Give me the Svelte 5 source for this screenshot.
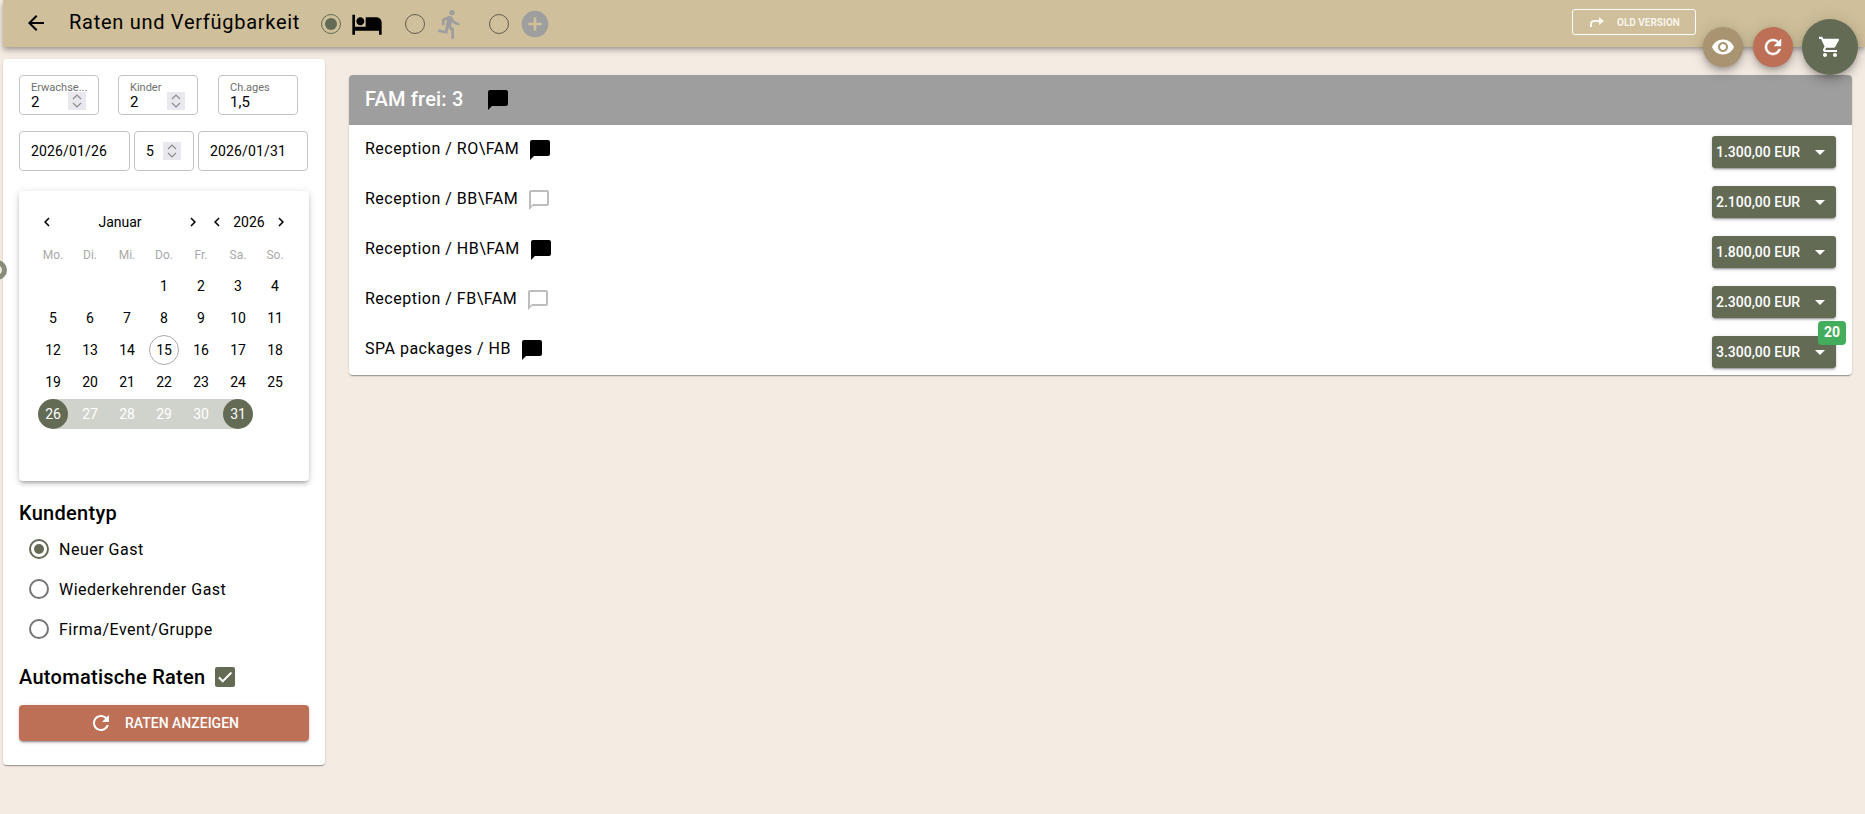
<script>
  // Rate & availability screen: left search panel, right list of room rates.
  const icons = {
    back: 'M20 11H7.83l5.59-5.59L12 4l-8 8 8 8 1.41-1.41L7.83 13H20v-2z',
    hotel: 'M7 13c1.66 0 3-1.34 3-3S8.66 7 7 7s-3 1.34-3 3 1.34 3 3 3zm12-6h-8v7H3V5H1v15h2v-3h18v3h2v-9c0-2.21-1.79-4-4-4z',
    run: 'M13.49 5.48c1.1 0 2-.9 2-2s-.9-2-2-2-2 .9-2 2 .9 2 2 2zm-3.6 13.9l1-4.4 2.1 2v6h2v-7.5l-2.1-2 .6-3c1.3 1.5 3.3 2.5 5.5 2.5v-2c-1.9 0-3.5-1-4.3-2.4l-1-1.6c-.4-.6-1-1-1.7-1-.3 0-.5.1-.8.1l-5.2 2.2v4.7h2v-3.4l1.8-.7-1.6 8.1-4.9-1-.4 2 7 1.4z',
    add: 'M12 2C6.48 2 2 6.48 2 12s4.48 10 10 10 10-4.48 10-10S17.52 2 12 2zm5 11h-4v4h-2v-4H7v-2h4V7h2v4h4v2z',
    chat: 'M20 2H4c-1.1 0-2 .9-2 2v18l4-4h14c1.1 0 2-.9 2-2V4c0-1.1-.9-2-2-2z',
    chatOutline: 'M20 2H4c-1.1 0-2 .9-2 2v18l4-4h14c1.1 0 2-.9 2-2V4c0-1.1-.9-2-2-2zm0 14H6l-2 2V4h16v12z',
    eye: 'M12 4.5C7 4.5 2.73 7.61 1 12c1.73 4.39 6 7.5 11 7.5s9.27-3.11 11-7.5c-1.73-4.39-6-7.5-11-7.5zM12 17c-2.76 0-5-2.24-5-5s2.24-5 5-5 5 2.24 5 5-2.24 5-5 5zm0-8c-1.66 0-3 1.34-3 3s1.34 3 3 3 3-1.34 3-3-1.34-3-3-3z',
    refresh: 'M17.65 6.35C16.2 4.9 14.21 4 12 4c-4.42 0-7.99 3.58-7.99 8s3.57 8 7.99 8c3.73 0 6.84-2.55 7.73-6h-2.08c-.82 2.33-3.04 4-5.65 4-3.31 0-6-2.69-6-6s2.69-6 6-6c1.66 0 3.14.69 4.22 1.78L13 11h7V4l-2.35 2.35z',
    cart: 'M7 18c-1.1 0-1.99.9-1.99 2S5.9 22 7 22s2-.9 2-2-.9-2-2-2zM1 2v2h2l3.6 7.59-1.35 2.45c-.16.28-.25.61-.25.96 0 1.1.9 2 2 2h12v-2H7.42c-.14 0-.25-.11-.25-.25l.03-.12.9-1.83h7.45c.75 0 1.41-.41 1.75-1.03l3.58-6.49c.08-.14.12-.31.12-.48 0-.55-.45-1-1-1H5.21l-.94-2H1zm16 16c-1.1 0-1.99.9-1.99 2s.89 2 1.99 2 2-.9 2-2-.9-2-2-2z',
    left: 'M15.41 7.41L14 6l-6 6 6 6 1.41-1.41L10.83 12z',
    right: 'M10 6L8.59 7.41 13.17 12l-4.58 4.59L10 18l6-6z',
    caret: 'M7 10l5 5 5-5z',
    check: 'M9 16.17L4.83 12l-1.42 1.41L9 19 21 7l-1.41-1.41z',
  };

  const weekdays = ['Mo.', 'Di.', 'Mi.', 'Do.', 'Fr.', 'Sa.', 'So.'];
  const days = [...Array(3).fill(null), ...Array.from({ length: 31 }, (_, i) => i + 1)];

  function dayClass(d) {
    if (d === 26) return 'start';
    if (d === 31) return 'end';
    if (d > 26 && d < 31) return 'between';
    if (d === 15) return 'today';
    return '';
  }

  const customerTypes = [
    { label: 'Neuer Gast', checked: true },
    { label: 'Wiederkehrender Gast' },
    { label: 'Firma/Event/Gruppe' },
  ];

  const rates = [
    { name: 'Reception / RO\\FAM', note: true, price: '1.300,00 EUR' },
    { name: 'Reception / BB\\FAM', note: false, price: '2.100,00 EUR' },
    { name: 'Reception / HB\\FAM', note: true, price: '1.800,00 EUR' },
    { name: 'Reception / FB\\FAM', note: false, price: '2.300,00 EUR' },
    { name: 'SPA packages / HB', note: true, price: '3.300,00 EUR', badge: 20 },
  ];
</script>

{#snippet icon(d, size = 24, cls = '')}
  <svg class="icon {cls}" width={size} height={size} viewBox="0 0 24 24"><path {d} /></svg>
{/snippet}

{#snippet spinner()}
  <span class="spinner">
    <svg width="12" height="8" viewBox="0 0 12 8"><path d="M2 6l4-4 4 4" /></svg>
    <svg width="12" height="8" viewBox="0 0 12 8"><path d="M2 2l4 4 4-4" /></svg>
  </span>
{/snippet}

<div class="page">
  <header class="topbar">
    <span class="back">{@render icon(icons.back)}</span>
    <h1>Raten und Verfügbarkeit</h1>
    <span class="mode mode-hotel">
      <span class="radio small checked"></span>
      {@render icon(icons.hotel, 32, 'black')}
    </span>
    <span class="mode mode-run">
      <span class="radio small"></span>
      {@render icon(icons.run, 32, 'grey')}
    </span>
    <span class="mode mode-add">
      <span class="radio small"></span>
      {@render icon(icons.add, 32, 'grey')}
    </span>
    <button class="old-version">
      <svg width="14" height="12" viewBox="0 0 14 12">
        <path class="stem" d="M1 11V8c0-2 1-3 3-3h6" />
        <path class="head" d="M9 1l5 4-5 4z" />
      </svg>
      <span>OLD VERSION</span>
    </button>
  </header>

  <div class="fabs">
    <button class="fab eye">{@render icon(icons.eye)}</button>
    <button class="fab reload">{@render icon(icons.refresh)}</button>
    <button class="fab cart">{@render icon(icons.cart)}</button>
  </div>

  <span class="drawer-handle"></span>

  <div class="content">
    <aside class="panel">
      <div class="fields top">
        <div class="field w80">
          <label for="adults">Erwachse...</label>
          <span class="value" id="adults">2</span>
          {@render spinner()}
        </div>
        <div class="field w80">
          <label for="kids">Kinder</label>
          <span class="value" id="kids">2</span>
          {@render spinner()}
        </div>
        <div class="field w80 ages">
          <label for="ages">Ch.ages</label>
          <span class="value" id="ages">1,5</span>
        </div>
      </div>

      <div class="fields dates">
        <div class="field date from">2026/01/26</div>
        <div class="field date nights">5 {@render spinner()}</div>
        <div class="field date to">2026/01/31</div>
      </div>

      <div class="calendar">
        <div class="cal-nav">
          <div class="cal-group month">
            {@render icon(icons.left, 18)}
            <span>Januar</span>
            {@render icon(icons.right, 18)}
          </div>
          <div class="cal-group year">
            {@render icon(icons.left, 18)}
            <span>2026</span>
            {@render icon(icons.right, 18)}
          </div>
        </div>
        <div class="cal-grid">
          {#each weekdays as w}
            <span class="weekday">{w}</span>
          {/each}
          {#each days as d}
            <span class="cell {dayClass(d)}">
              {#if d}<span class="day">{d}</span>{/if}
            </span>
          {/each}
        </div>
      </div>

      <h2>Kundentyp</h2>
      <div class="radios">
        {#each customerTypes as c}
          <div class="radio-row">
            <span class="radio" class:checked={c.checked}></span>
            <span>{c.label}</span>
          </div>
        {/each}
      </div>

      <div class="auto">
        <h2>Automatische Raten</h2>
        <span class="checkbox">{@render icon(icons.check, 18)}</span>
      </div>

      <button class="show-rates">
        {@render icon(icons.refresh)}
        <span>RATEN ANZEIGEN</span>
      </button>
    </aside>

    <main class="rates">
      <div class="rates-head">
        <span>FAM frei: 3</span>
        {@render icon(icons.chat, 24, 'black')}
      </div>
      {#each rates as r}
        <div class="rate">
          <span class="rate-name">{r.name}</span>
          {@render icon(r.note ? icons.chat : icons.chatOutline, 24, r.note ? 'black' : 'light')}
          <button class="price">
            <span>{r.price}</span>
            {@render icon(icons.caret)}
            {#if r.badge}<span class="badge">{r.badge}</span>{/if}
          </button>
        </div>
      {/each}
    </main>
  </div>
</div>

<style>
  :global(body) {
    background: #f4ebe2;
    font-family: Roboto, sans-serif;
    color: #000;
  }

  .page {
    position: relative;
    height: 814px;
    overflow: hidden;
  }

  .icon {
    display: block;
    flex: none;
    fill: currentColor;
  }

  .icon.black {
    color: #000;
  }

  .icon.grey {
    color: #9e9e9e;
  }

  .icon.light {
    color: #bdbdbd;
  }

  button {
    border: none;
    font-family: inherit;
    padding: 0;
  }

  .topbar {
    position: relative;
    display: flex;
    align-items: center;
    height: 47px;
    margin-left: 3px;
    background: #cfbf9a;
    box-shadow: 0 2px 4px -1px rgba(0, 0, 0, 0.2), 0 4px 5px rgba(0, 0, 0, 0.14), 0 1px 10px rgba(0, 0, 0, 0.12);
  }

  .back {
    margin-left: 21px;
    margin-top: -2px;
  }

  h1 {
    margin: -4px 0 0 21px;
    font-size: 20px;
    font-weight: 400;
    letter-spacing: 0.72px;
    white-space: nowrap;
  }

  .mode {
    display: flex;
    align-items: center;
  }

  .mode-hotel {
    margin-left: 21px;
    gap: 10px;
  }

  .mode-run {
    margin-left: 22px;
    gap: 9px;
  }

  .mode-add {
    margin-left: 23px;
    gap: 10px;
  }

  .radio {
    position: relative;
    display: block;
    flex: none;
    box-sizing: border-box;
    width: 20px;
    height: 20px;
    border: 2px solid #757575;
    border-radius: 50%;
  }

  .radio.small {
    border-color: #5f5f50;
    border-width: 1.5px;
  }

  .radio.checked {
    border-color: #636b55;
  }

  .radio.checked::after {
    content: '';
    position: absolute;
    inset: 3px;
    border-radius: 50%;
    background: #636b55;
  }

  .old-version {
    display: flex;
    align-items: center;
    gap: 13px;
    box-sizing: border-box;
    width: 124px;
    height: 26px;
    margin: -3px 169px 0 auto;
    padding-left: 17px;
    background: none;
    border: 1px solid #fff;
    border-radius: 3px;
    color: rgba(255, 255, 255, 0.85);
    font-size: 10px;
    font-weight: 700;
  }

  .old-version svg {
    flex: none;
  }

  .old-version .stem {
    fill: none;
    stroke: currentColor;
    stroke-width: 2;
  }

  .old-version .head {
    fill: currentColor;
  }

  .fabs {
    position: absolute;
    top: 19px;
    left: 1703px;
    display: flex;
    align-items: flex-start;
    gap: 10px;
  }

  .fab {
    display: flex;
    align-items: center;
    justify-content: center;
    width: 40px;
    height: 40px;
    margin-top: 8px;
    border-radius: 50%;
    color: #fff;
    box-shadow: 0 3px 5px -1px rgba(0, 0, 0, 0.2), 0 6px 10px rgba(0, 0, 0, 0.14), 0 1px 18px rgba(0, 0, 0, 0.12);
  }

  .fab.eye {
    background: #a89470;
  }

  .fab.reload {
    background: #bd7056;
  }

  .fab.reload .icon {
    stroke: currentColor;
    stroke-width: 0.5;
  }

  .fab.cart {
    width: 56px;
    height: 56px;
    margin-top: 0;
    margin-left: -1px;
    background: #636b55;
  }

  .drawer-handle {
    position: absolute;
    top: 260px;
    left: -13px;
    box-sizing: border-box;
    width: 20px;
    height: 20px;
    border: 5px solid #878c79;
    border-radius: 50%;
    z-index: 2;
  }

  .content {
    display: flex;
    align-items: flex-start;
    margin: 12px 0 0 3px;
  }

  .panel {
    flex: none;
    box-sizing: border-box;
    width: 322px;
    padding: 16px 16px 24px;
    background: #fff;
    border-radius: 4px;
    box-shadow: 0 2px 1px -1px rgba(0, 0, 0, 0.2), 0 1px 1px rgba(0, 0, 0, 0.14), 0 1px 3px rgba(0, 0, 0, 0.12);
  }

  .fields {
    display: flex;
  }

  .fields.top {
    gap: 19px;
  }

  .fields.dates {
    gap: 4px;
    margin-top: 16px;
  }

  .field {
    position: relative;
    box-sizing: border-box;
    height: 40px;
    padding: 5px 11px;
    border: 1px solid #c4c4c4;
    border-radius: 4px;
    font-size: 15px;
  }

  .field.w80 {
    width: 80px;
  }

  .field.ages {
    margin-left: 1px;
  }

  .field label {
    display: block;
    color: #6f6f6f;
    font-size: 11px;
    line-height: 13px;
  }

  .value {
    display: block;
    line-height: 17px;
  }

  .spinner {
    position: absolute;
    top: 16px;
    right: 12px;
    display: flex;
    flex-direction: column;
    align-items: center;
    justify-content: center;
    width: 18px;
    height: 18px;
    background: #e8e8ee;
  }

  .spinner svg {
    display: block;
    fill: none;
    stroke: #8d8d8d;
    stroke-width: 1.2;
  }

  .field.date {
    display: flex;
    align-items: center;
    font-size: 14px;
    letter-spacing: 0.15px;
  }

  .field.from {
    width: 111px;
  }

  .field.nights {
    width: 60px;
  }

  .field.nights .spinner {
    top: 10px;
  }

  .field.to {
    width: 110px;
  }

  .calendar {
    box-sizing: border-box;
    height: 290px;
    margin-top: 20px;
    padding: 19px 15.5px 0;
    background: #fff;
    border-radius: 4px;
    box-shadow: 0 3px 3px -2px rgba(0, 0, 0, 0.2), 0 3px 4px rgba(0, 0, 0, 0.14), 0 1px 8px rgba(0, 0, 0, 0.12);
  }

  .cal-nav {
    display: flex;
    margin-bottom: 6px;
    font-size: 14px;
  }

  .cal-group {
    display: flex;
    align-items: center;
    height: 24px;
    text-align: center;
  }

  .cal-group span {
    flex: 1;
    padding-left: 1px;
  }

  .cal-group .icon {
    margin: 0 3px;
  }

  .month {
    width: 170px;
  }

  .year {
    width: 88px;
  }

  .cal-grid {
    display: grid;
    grid-template-columns: repeat(7, 37px);
    grid-auto-rows: 32px;
    grid-template-rows: 30px;
    font-size: 14px;
  }

  .weekday {
    align-self: center;
    color: #a9a9a9;
    font-size: 12px;
    text-align: center;
  }

  .cell {
    display: flex;
    align-items: center;
    justify-content: center;
  }

  .day {
    display: flex;
    align-items: center;
    justify-content: center;
    box-sizing: border-box;
    width: 30px;
    height: 30px;
    border-radius: 50%;
  }

  .cell.today .day {
    border: 1px solid #a9a9a9;
  }

  .cell.between {
    height: 30px;
    align-self: center;
    background: #d0d3cc;
    color: #fff;
  }

  .cell.start,
  .cell.end {
    height: 30px;
    align-self: center;
    color: #fff;
  }

  .cell.start {
    background: linear-gradient(to right, transparent 50%, #d0d3cc 50%);
  }

  .cell.end {
    background: linear-gradient(to right, #d0d3cc 50%, transparent 50%);
  }

  .cell.start .day,
  .cell.end .day {
    background: #636b55;
  }

  h2 {
    margin: 0;
    font-size: 20px;
    font-weight: 500;
    line-height: 24px;
    letter-spacing: 0.28px;
  }

  .panel > h2 {
    margin-top: 20px;
  }

  .radios {
    margin-top: 4px;
    padding-left: 10px;
  }

  .radio-row {
    display: flex;
    align-items: center;
    gap: 10px;
    height: 40px;
    font-size: 16px;
    letter-spacing: 0.5px;
  }

  .auto {
    display: flex;
    align-items: center;
    gap: 10px;
    margin-top: 16px;
  }

  .checkbox {
    display: flex;
    align-items: center;
    justify-content: center;
    width: 20px;
    height: 20px;
    background: #636b55;
    border-radius: 2px;
    color: #fff;
  }

  .checkbox .icon {
    stroke: currentColor;
    stroke-width: 1;
  }

  .show-rates {
    display: flex;
    align-items: center;
    justify-content: center;
    gap: 12px;
    width: 100%;
    height: 36px;
    margin-top: 16px;
    background: #bd7056;
    border-radius: 4px;
    color: #fff;
    font-size: 14px;
    font-weight: 500;
    box-shadow: 0 3px 1px -2px rgba(0, 0, 0, 0.2), 0 2px 2px rgba(0, 0, 0, 0.14), 0 1px 5px rgba(0, 0, 0, 0.12);
  }

  .rates {
    flex: none;
    width: 1503px;
    margin: 16px 0 0 24px;
    background: #fff;
    border-radius: 4px;
    box-shadow: 0 2px 1px -1px rgba(0, 0, 0, 0.2), 0 1px 1px rgba(0, 0, 0, 0.14), 0 1px 3px rgba(0, 0, 0, 0.12);
  }

  .rates-head {
    display: flex;
    align-items: center;
    gap: 22px;
    height: 50px;
    padding-left: 16px;
    background: #9e9e9e;
    border-radius: 4px 4px 0 0;
    color: #fff;
    font-size: 20px;
    font-weight: 500;
    letter-spacing: 0.2px;
  }

  .rates-head span {
    margin-top: -2px;
  }

  .rate {
    display: flex;
    align-items: center;
    gap: 9px;
    height: 50px;
    padding: 0 16px;
    font-size: 16px;
    letter-spacing: 0.5px;
  }

  .rate-name {
    margin-top: -4px;
  }

  .price {
    position: relative;
    display: flex;
    align-items: center;
    justify-content: space-between;
    box-sizing: border-box;
    width: 124px;
    height: 32px;
    margin: 4px 0 0 auto;
    padding: 0 4px;
    background: #636b55;
    border-radius: 3px;
    color: #fff;
    font-size: 14px;
    font-weight: 500;
    box-shadow: 0 3px 1px -2px rgba(0, 0, 0, 0.2), 0 2px 2px rgba(0, 0, 0, 0.14), 0 1px 5px rgba(0, 0, 0, 0.12);
  }

  .badge {
    position: absolute;
    top: -15px;
    right: -10px;
    width: 28px;
    height: 24px;
    background: #43ad5b;
    border-radius: 4px;
    font-size: 14px;
    font-weight: 700;
    line-height: 22px;
    text-align: center;
  }
</style>
